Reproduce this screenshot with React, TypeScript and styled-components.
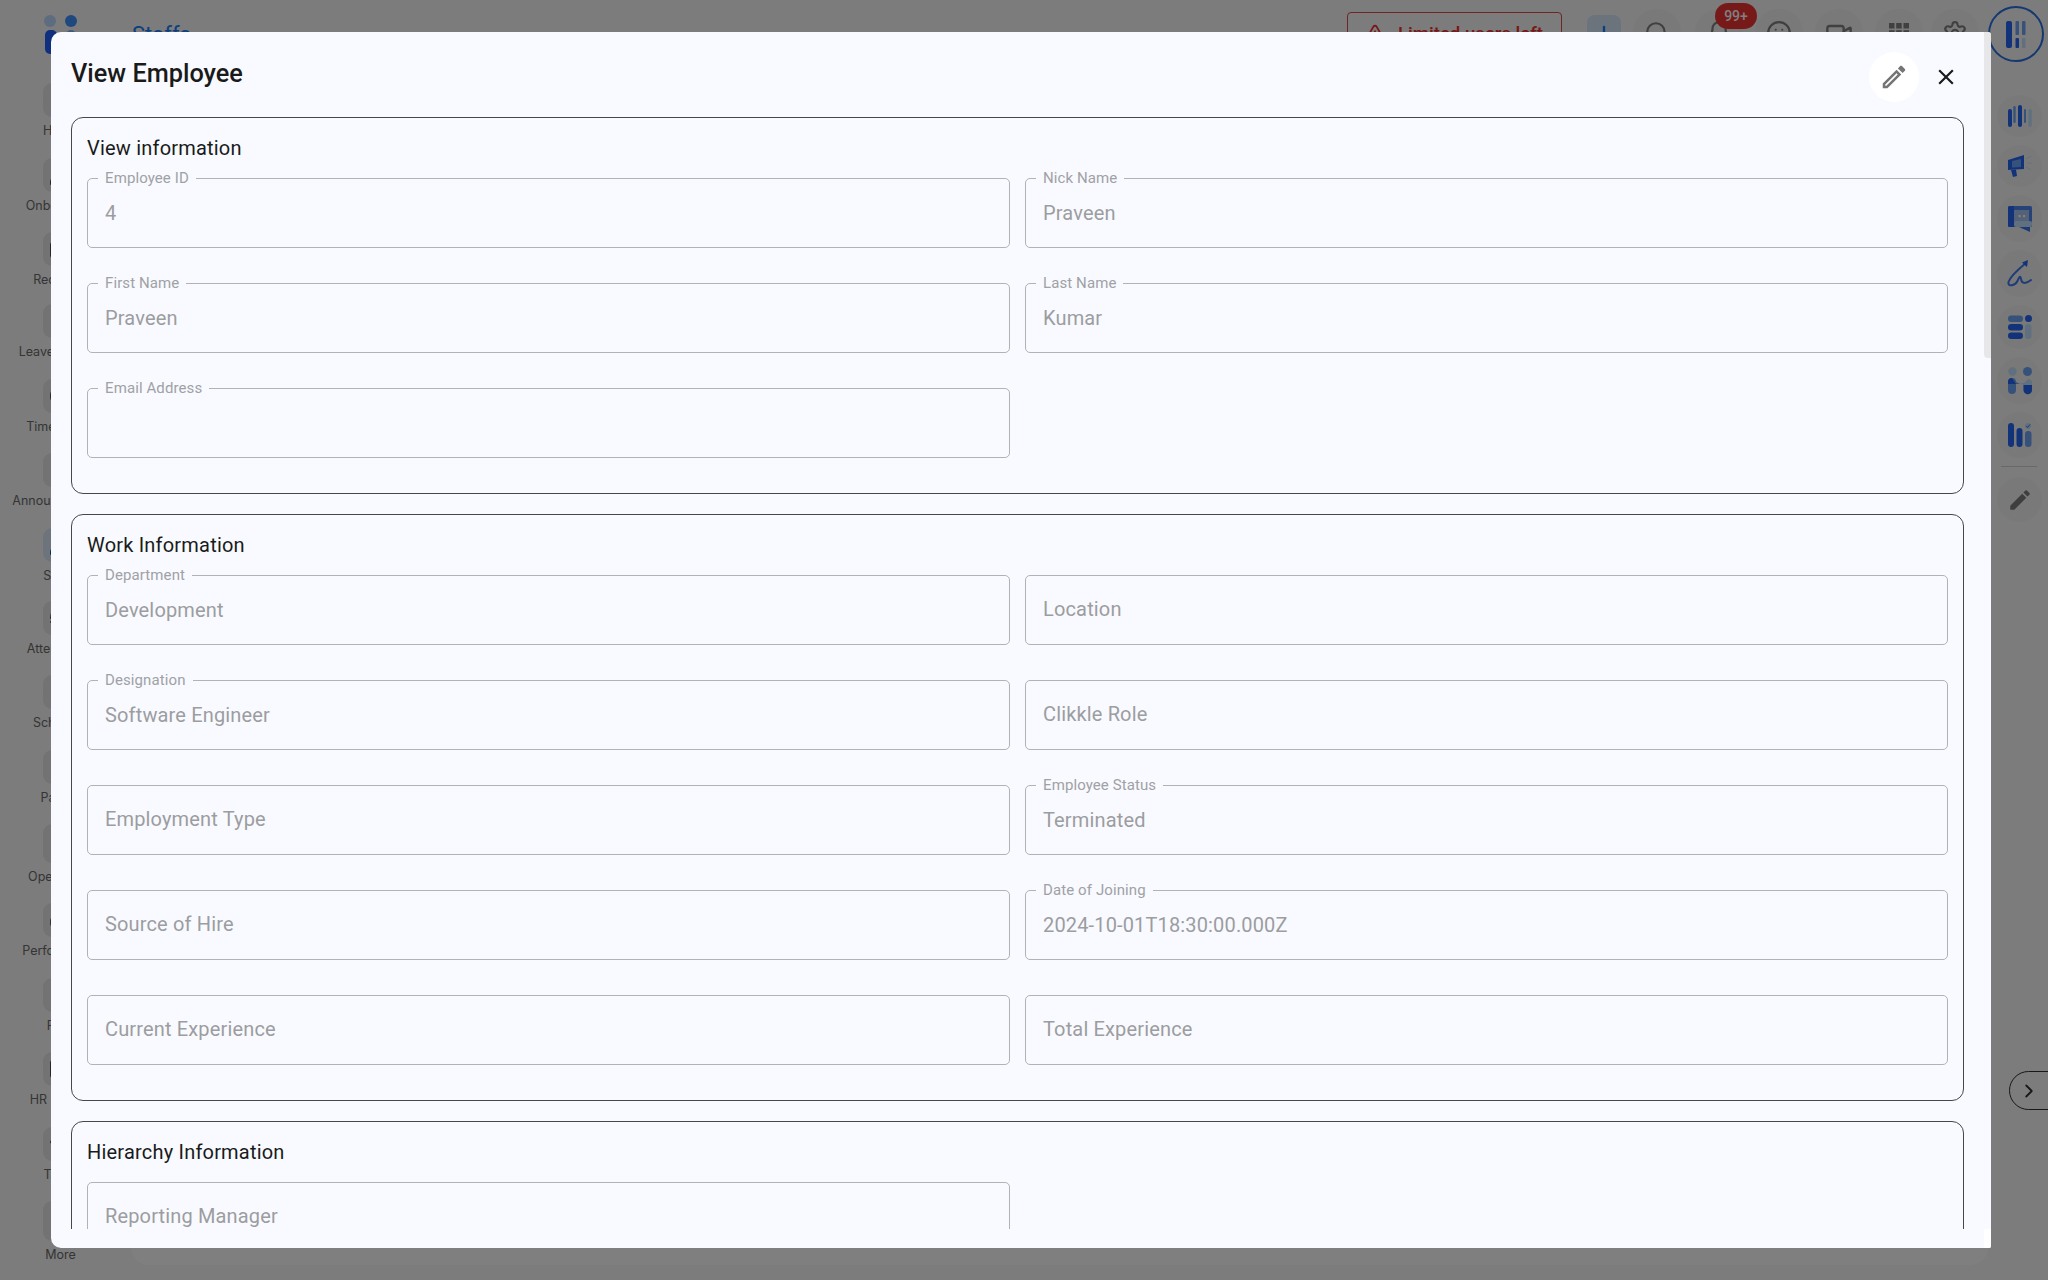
import React from "react";
import styled, { createGlobalStyle } from "styled-components";
import {
  House, UserPlus, Briefcase, CalendarDays, Clock, Megaphone, Users, Fingerprint,
  CalendarClock, Wallet, Settings2, Gauge, FileText, Mail, GraduationCap, LayoutGrid,
  Plus, Search, Bell, Smile, Video, Settings, ChevronRight, TriangleAlert,
} from "lucide-react";

const Global = createGlobalStyle`
  html, body { margin: 0; padding: 0; background: #f8f8f8; }
  * { box-sizing: border-box; }
  body { font-family: "Roboto", "Liberation Sans", sans-serif; }
`;

const Page = styled.div`
  position: relative;
  width: 2048px;
  height: 1280px;
  overflow: hidden;
  display: grid;
  grid-template-columns: 131px 1857px 60px;
  grid-template-rows: 70px 1fr;
  background: #f8f8f8;
`;

/* ---------- top bar ---------- */
const TopBar = styled.header`
  grid-column: 1 / 4;
  display: flex;
  align-items: flex-start;
  padding: 0 4px 0 44px;
`;
const Logo = styled.svg`
  width: 34px;
  height: 54px;
  flex: none;
  margin-top: 14px;
`;
const AppName = styled.div`
  margin: 22px 0 0 54px;
  font-size: 22px;
  line-height: 26px;
  font-weight: 400;
  color: #1a7dff;
`;
const Spacer = styled.div`
  flex: 1;
`;
const LimitBox = styled.div`
  display: flex;
  align-items: center;
  gap: 12px;
  width: 215px;
  height: 44px;
  margin: 12px 25px 0 0;
  padding: 0 16px;
  border: 1px solid #e04a4a;
  border-radius: 4px;
  color: #f03030;
  font-size: 18.6px;
  font-weight: 500;
  white-space: nowrap;
`;
const PlusBox = styled.div`
  width: 34px;
  height: 40px;
  margin: 15px 12px 0 0;
  border-radius: 8px;
  background: #d6e6fb;
  color: #1a7dff;
  display: flex;
  align-items: center;
  justify-content: center;
`;
const TopIcon = styled.div<{ $gap?: number }>`
  position: relative;
  width: 48px;
  height: 48px;
  margin: 9px ${(p) => p.$gap ?? 12}px 0 0;
  border-radius: 50%;
  background: #f2f2f2;
  color: #808080;
  display: flex;
  align-items: center;
  justify-content: center;
`;
const Badge = styled.span`
  position: absolute;
  top: -6px;
  left: 20px;
  width: 42px;
  height: 26px;
  border-radius: 13px;
  background: #f03232;
  color: #fff;
  font-size: 14px;
  font-weight: 500;
  display: flex;
  align-items: center;
  justify-content: center;
`;
const ProfileRing = styled.div`
  width: 56px;
  height: 56px;
  margin: 6px 0 0 -3px;
  border: 2px solid #2a70e0;
  border-radius: 50%;
  display: flex;
  align-items: center;
  justify-content: center;
`;

/* ---------- left navigation ---------- */
const Sidebar = styled.nav`
  display: flex;
  flex-direction: column;
  padding-top: 13px;
`;
const NavItem = styled.div<{ $h?: number }>`
  height: ${(p) => p.$h ?? 74.5}px;
  display: flex;
  flex-direction: column;
  align-items: center;
  padding-right: 10px;
  font-family: "Inter", "Liberation Sans", sans-serif;
  font-size: 12.5px;
  line-height: 16px;
  color: #6a6a6a;
  white-space: nowrap;
`;
const NavIcon = styled.div<{ $active?: boolean; $h?: number }>`
  width: 35px;
  height: ${(p) => p.$h ?? 34}px;
  margin-bottom: 6px;
  border-radius: 9px;
  background: ${(p) => (p.$active ? "#dde9f8" : "#e6e6e6")};
  color: ${(p) => (p.$active ? "#2050b0" : "#4c4c4c")};
  display: flex;
  align-items: center;
  justify-content: center;
  flex: none;
`;

/* ---------- main backdrop ---------- */
const MainPanel = styled.main`
  background: #ffffff;
  border-radius: 18px;
  margin-bottom: 15px;
`;

/* ---------- right rail ---------- */
const Rail = styled.aside`
  position: relative;
  display: flex;
  flex-direction: column;
  padding: 25px 0 0 9px;
`;
const RailSlot = styled.div<{ $h: number }>`
  width: 45px;
  height: ${(p) => p.$h}px;
  flex: none;
  padding-bottom: 8px;
`;
const RailCircle = styled.div`
  width: 100%;
  height: 100%;
  border-radius: 50%;
  background: #f3f3f3;
  display: flex;
  align-items: center;
  justify-content: center;
`;
const RailLine = styled.div`
  width: 36px;
  height: 1px;
  margin: 0 0 10px 4px;
  background: #d0d0d0;
`;
const CollapseToggle = styled.button`
  position: absolute;
  top: 1001px;
  left: 21px;
  width: 60px;
  height: 39px;
  padding: 0 0 0 8px;
  display: flex;
  align-items: center;
  background: transparent;
  border: 1px solid #303030;
  border-radius: 20px;
  color: #303030;
`;

/* ---------- modal ---------- */
const Backdrop = styled.div`
  position: absolute;
  inset: 0;
  background: rgba(0, 0, 0, 0.5);
  padding: 32px 0 0 51px;
`;
const Modal = styled.div`
  position: relative;
  width: 1940px;
  height: 1216px;
  padding: 0 27px 19px 20px;
  background: #f8faff;
  border-radius: 10px 3px 2px 10px;
  display: flex;
  flex-direction: column;
  overflow: hidden;
`;
const ScrollThumb = styled.div`
  position: absolute;
  top: 0;
  right: 0;
  width: 7px;
  height: 326px;
  background: #e7e7ea;
  border-radius: 0 3px 0 4px;
`;
const ScrollCorner = styled.div`
  position: absolute;
  bottom: 0;
  right: 0;
  width: 7px;
  height: 19px;
  background: #ffffff;
`;
const ModalHead = styled.div`
  height: 85px;
  flex: none;
  display: flex;
  align-items: flex-start;
  justify-content: space-between;
`;
const ModalTitle = styled.h2`
  margin: 27px 0 0;
  font-size: 25.3px;
  line-height: 30px;
  font-weight: 500;
  color: #1a1a1a;
`;
const HeadActions = styled.div`
  display: flex;
  align-items: center;
  gap: 7px;
  margin-top: 20px;
  margin-right: -2px;
`;
const EditButton = styled.button`
  width: 50px;
  height: 50px;
  padding: 0;
  border: none;
  border-radius: 50%;
  background: #ffffff;
  color: #757575;
  display: flex;
  align-items: center;
  justify-content: center;
`;
const CloseButton = styled.button`
  width: 40px;
  height: 40px;
  padding: 0;
  border: none;
  background: transparent;
  color: #1a1a1a;
  display: flex;
  align-items: center;
  justify-content: center;
`;
const ModalBody = styled.div`
  flex: 1;
  min-height: 0;
  overflow: hidden;
  display: flex;
  flex-direction: column;
  gap: 20px;
`;
const Section = styled.section`
  flex: none;
  padding: 0 15px 35px;
  border: 1px solid #45474d;
  border-radius: 12px;
`;
const SectionTitle = styled.h3`
  height: 60px;
  margin: 0;
  padding-top: 17px;
  font-size: 20px;
  line-height: 26px;
  font-weight: 400;
  letter-spacing: 0.2px;
  color: #1a1a1a;
`;
const FieldGrid = styled.div`
  display: grid;
  grid-template-columns: 923px 923px;
  column-gap: 15px;
  row-gap: 35px;
`;
const Field = styled.div`
  position: relative;
  height: 70px;
  padding: 0 17px;
  border: 1px solid #b1b2b6;
  border-radius: 5px;
  display: flex;
  align-items: center;
`;
const FieldLabel = styled.label`
  position: absolute;
  top: -10px;
  left: 10px;
  padding: 0 7px;
  background: #f8faff;
  font-size: 15px;
  line-height: 18px;
  letter-spacing: 0.1px;
  color: #a0a1a5;
`;
const FieldValue = styled.span<{ $placeholder?: boolean }>`
  margin-top: ${(p) => (p.$placeholder ? "-2px" : "0")};
  font-size: 20px;
  line-height: 26px;
  letter-spacing: 0.15px;
  color: #9c9d9f;
`;

type F = { label?: string; value?: string };
const FormField = ({ label, value }: F) => (
  <Field>
    {label && <FieldLabel>{label}</FieldLabel>}
    {value && <FieldValue $placeholder={!label}>{value}</FieldValue>}
  </Field>
);

const viewInfo: F[] = [
  { label: "Employee ID", value: "4" },
  { label: "Nick Name", value: "Praveen" },
  { label: "First Name", value: "Praveen" },
  { label: "Last Name", value: "Kumar" },
  { label: "Email Address" },
];
const workInfo: F[] = [
  { label: "Department", value: "Development" },
  { value: "Location" },
  { label: "Designation", value: "Software Engineer" },
  { value: "Clikkle Role" },
  { value: "Employment Type" },
  { label: "Employee Status", value: "Terminated" },
  { value: "Source of Hire" },
  { label: "Date of Joining", value: "2024-10-01T18:30:00.000Z" },
  { value: "Current Experience" },
  { value: "Total Experience" },
];

const nav: { name: string; Icon: React.ComponentType<{ size?: number }>; h?: number; ih?: number; active?: boolean }[] = [
  { name: "Home", Icon: House },
  { name: "Onboarding", Icon: UserPlus },
  { name: "Requests", Icon: Briefcase, h: 72 },
  { name: "Leave Tracker", Icon: CalendarDays },
  { name: "Timesheets", Icon: Clock },
  { name: "Announcements", Icon: Megaphone },
  { name: "Staffs", Icon: Users, active: true, h: 73 },
  { name: "Attendance", Icon: Fingerprint },
  { name: "Schedule", Icon: CalendarClock },
  { name: "Payroll", Icon: Wallet },
  { name: "Operations", Icon: Settings2, h: 79, ih: 39 },
  { name: "Performance", Icon: Gauge },
  { name: "Files", Icon: FileText },
  { name: "HR Letters", Icon: Mail },
  { name: "Tasks", Icon: GraduationCap },
  { name: "More", Icon: LayoutGrid, ih: 40 },
];

const D = "#2466f4";
const M = "#6ea4f4";
const L = "#c0e0ff";

const RailBars = () => (
  <svg width="24" height="22" viewBox="0 0 24 22">
    <rect x="0" y="4" width="4" height="18" rx="2" fill={D} />
    <rect x="5.3" y="1" width="2.4" height="17" rx="1.2" fill={M} />
    <rect x="10" y="0" width="4" height="22" rx="2" fill={D} />
    <rect x="16" y="4" width="2" height="14" rx="1" fill={M} />
    <rect x="20.3" y="4" width="3.5" height="18" rx="1.7" fill={L} />
  </svg>
);
const RailMegaphone = () => (
  <svg width="24" height="22" viewBox="0 0 24 22">
    <path d="M0 5 L16 0 L16 14 L0 15 Z" fill={D} />
    <path d="M4 6 L13 4 L13 12 L4 12.5 Z" fill={M} />
    <path d="M3 15 L8 14.5 L9 21 L5 22 Z" fill={D} />
    <path d="M18 4 L23 1 M19 8 L24 8 M18 12 L23 15" stroke={L} strokeWidth="0.8" />
  </svg>
);
const RailChat = () => (
  <svg width="24" height="26" viewBox="0 0 24 26">
    <rect x="0" y="0" width="24" height="21" rx="1.5" fill="#4c84f0" />
    <path d="M0 1.5 A1.5 1.5 0 0 1 1.5 0 H6 V21 H1.5 A1.5 1.5 0 0 1 0 19.5 Z" fill={D} />
    <rect x="6" y="4" width="15" height="12" fill="#a8c4ee" />
    <rect x="6" y="15" width="18" height="6" rx="2" fill={L} />
    <path d="M11 21 H22 V26 Z" fill="#3a74ee" />
    <rect x="10.5" y="9" width="2.2" height="2.2" fill="#fff" />
    <rect x="15" y="9" width="2.2" height="2.2" fill="#fff" />
  </svg>
);
const RailSign = () => (
  <svg width="25" height="28" viewBox="0 0 25 28">
    <path d="M19 3 C13 8 4 15 1.5 22 C0.5 27 8 26 10.5 21 C12 17 13.5 15 14 19 C14.5 24 19 24 24 20" fill="none" stroke="#3c78f0" strokeWidth="2" strokeLinecap="round" />
    <path d="M15 2.5 L21 0 L20 7 Z" fill={D} />
  </svg>
);
const RailList = () => (
  <svg width="24" height="24" viewBox="0 0 24 24">
    <rect x="0" y="0.5" width="15" height="6.5" rx="3.2" fill={M} />
    <rect x="0" y="9" width="15" height="6.5" rx="3.2" fill={D} />
    <rect x="0" y="17.5" width="15" height="6.5" rx="3.2" fill={D} />
    <circle cx="20.5" cy="3.5" r="3.5" fill={D} />
    <rect x="17" y="9" width="6.5" height="15" rx="3.2" fill={L} />
  </svg>
);
const RailPeople = () => (
  <svg width="24" height="28" viewBox="0 0 24 28">
    <circle cx="4.5" cy="4.5" r="4.2" fill={L} />
    <circle cx="19.5" cy="4.5" r="4.5" fill={M} />
    <path d="M0 15 a4 4 0 0 1 4 -4 a4 4 0 0 1 4 4 l4 2 h-4 v6 a4 4 0 0 1 -8 0 Z" fill={M} />
    <path d="M0 15 a4 4 0 0 1 4 -4 l4 6 h-8 Z" fill={D} />
    <path d="M24 16 a4 4 0 0 0 -4 -4 l-4 4 h-4 l3.5 2 v5 a4 4 0 0 0 8.5 0 Z" fill={L} />
    <path d="M15.5 18 h8.5 v5 a4 4 0 0 1 -8.5 0 Z" fill={D} />
  </svg>
);
const RailChecks = () => (
  <svg width="24" height="24" viewBox="0 0 24 24">
    <rect x="0" y="0" width="6" height="24" rx="3" fill={D} />
    <rect x="8.5" y="5" width="6" height="19" rx="3" fill={D} />
    <rect x="17" y="8" width="6.5" height="16" rx="3" fill={M} />
    <circle cx="20" cy="3" r="3" fill={L} />
    <path d="M18.2 3 L19.6 4.5 L22 1.5" stroke={D} strokeWidth="0.9" fill="none" />
  </svg>
);

const railItems: { h: number; El: React.ComponentType }[] = [
  { h: 50, El: RailBars },
  { h: 50, El: RailMegaphone },
  { h: 55, El: RailChat },
  { h: 55, El: RailSign },
  { h: 52, El: RailList },
  { h: 55, El: RailPeople },
  { h: 54, El: RailChecks },
];

export default function App() {
  return (
    <Page>
      <Global />
      <TopBar>
        <Logo viewBox="0 0 34 54">
          <circle cx="6" cy="7" r="6" fill="#bcd8ff" />
          <circle cx="27" cy="7" r="6" fill="#3f90ff" />
          <rect x="1" y="16" width="12" height="24" rx="5" fill="#2060ff" />
          <rect x="22" y="16" width="10" height="24" rx="5" fill="#7eb4ff" />
        </Logo>
        <AppName>Staffs</AppName>
        <Spacer />
        <LimitBox>
          <TriangleAlert size={22} />
          Limited users left
        </LimitBox>
        <PlusBox>
          <Plus size={28} />
        </PlusBox>
        <TopIcon $gap={14}>
          <Search size={26} />
        </TopIcon>
        <TopIcon>
          <Bell size={26} />
          <Badge>99+</Badge>
        </TopIcon>
        <TopIcon>
          <Smile size={26} />
        </TopIcon>
        <TopIcon>
          <Video size={28} />
        </TopIcon>
        <TopIcon $gap={8}>
          <svg width="22" height="22" viewBox="0 0 22 22" fill="currentColor">
            <rect x="1" y="1" width="5.5" height="5.5" />
            <rect x="8.2" y="1" width="5.5" height="5.5" />
            <rect x="15.5" y="1" width="5.5" height="5.5" />
            <rect x="1" y="8.2" width="5.5" height="5.5" />
            <rect x="8.2" y="8.2" width="5.5" height="5.5" />
            <rect x="15.5" y="8.2" width="5.5" height="5.5" />
            <rect x="1" y="15.5" width="5.5" height="5.5" />
            <rect x="8.2" y="15.5" width="5.5" height="5.5" />
            <rect x="15.5" y="15.5" width="5.5" height="5.5" />
          </svg>
        </TopIcon>
        <TopIcon>
          <Settings size={26} />
        </TopIcon>
        <ProfileRing>
          <svg width="20" height="27" viewBox="0 0 20 27">
            <rect x="0" y="0" width="6" height="27" rx="2" fill={D} />
            <rect x="9.5" y="0" width="3.5" height="14" rx="1" fill={M} />
            <rect x="16" y="0" width="3.5" height="14" rx="1" fill={M} />
            <rect x="9.5" y="17" width="3.5" height="10" rx="1" fill={D} />
            <rect x="16" y="17" width="3.5" height="10" rx="1" fill={L} />
          </svg>
        </ProfileRing>
      </TopBar>

      <Sidebar>
        {nav.map(({ name, Icon, h, ih, active }) => (
          <NavItem key={name} $h={h}>
            <NavIcon $active={active} $h={ih}>
              <Icon size={24} />
            </NavIcon>
            {name}
          </NavItem>
        ))}
      </Sidebar>

      <MainPanel />

      <Rail>
        {railItems.map(({ h, El }, i) => (
          <RailSlot key={i} $h={h}>
            <RailCircle>
              <El />
            </RailCircle>
          </RailSlot>
        ))}
        <RailLine />
        <RailSlot $h={53}>
          <RailCircle>
            <svg width="26" height="26" viewBox="0 0 24 24" fill="#7c7c7c">
              <path d="M3 17.25V21h3.75L17.81 9.94l-3.75-3.75L3 17.25zM20.71 7.04a1 1 0 0 0 0-1.41l-2.34-2.34a1 1 0 0 0-1.41 0l-1.83 1.83 3.75 3.75 1.83-1.83z" />
            </svg>
          </RailCircle>
        </RailSlot>
        <CollapseToggle aria-label="Collapse">
          <ChevronRight size={22} />
        </CollapseToggle>
      </Rail>

      <Backdrop>
        <Modal>
          <ScrollThumb />
          <ScrollCorner />
          <ModalHead>
            <ModalTitle>View Employee</ModalTitle>
            <HeadActions>
              <EditButton aria-label="Edit">
                <svg width="30" height="30" viewBox="0 0 24 24" fill="currentColor">
                  <path d="M14.06 9.02l.92.92L5.92 19H5v-.92l9.06-9.06M17.66 3c-.25 0-.51.1-.7.29l-1.83 1.83 3.75 3.75 1.83-1.83c.39-.39.39-1.02 0-1.41l-2.34-2.34c-.2-.2-.45-.29-.71-.29zm-3.6 3.19L3 17.25V21h3.75L17.81 9.94l-3.75-3.75z" />
                </svg>
              </EditButton>
              <CloseButton aria-label="Close">
                <svg width="26" height="26" viewBox="0 0 24 24" fill="currentColor">
                  <path d="M19 6.41 17.59 5 12 10.59 6.41 5 5 6.41 10.59 12 5 17.59 6.41 19 12 13.41 17.59 19 19 17.59 13.41 12z" />
                </svg>
              </CloseButton>
            </HeadActions>
          </ModalHead>
          <ModalBody>
            <Section>
              <SectionTitle>View information</SectionTitle>
              <FieldGrid>
                {viewInfo.map((f, i) => (
                  <FormField key={i} {...f} />
                ))}
              </FieldGrid>
            </Section>
            <Section>
              <SectionTitle>Work Information</SectionTitle>
              <FieldGrid>
                {workInfo.map((f, i) => (
                  <FormField key={i} {...f} />
                ))}
              </FieldGrid>
            </Section>
            <Section>
              <SectionTitle>Hierarchy Information</SectionTitle>
              <FieldGrid>
                <FormField value="Reporting Manager" />
              </FieldGrid>
            </Section>
          </ModalBody>
        </Modal>
      </Backdrop>
    </Page>
  );
}
